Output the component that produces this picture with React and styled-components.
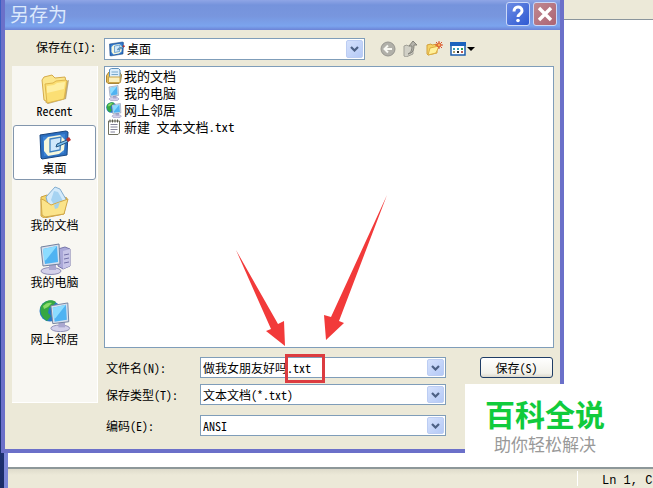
import React from 'react';
import styled, { createGlobalStyle, css } from 'styled-components';

const GlobalStyle = createGlobalStyle`
  * {
    box-sizing: border-box;
  }

  body {
    margin: 0;
    overflow: hidden;
  }

  body,
  button,
  input,
  select {
    color: #000;
    font-family: 'Noto Sans CJK SC', sans-serif;
    font-size: 12px;
    line-height: 16px;
    font-feature-settings: 'hwid' 1;
  }
`;

const Desktop = styled.div`
  position: relative;
  display: flex;
  min-height: 100vh;
  padding-left: 4px;
  background: linear-gradient(#3b5fc4, #24429c 60%, #1a2c66);
`;

const Editor = styled.div`
  display: flex;
  flex: 1;
  flex-direction: column;
  min-width: 0;
  border-left: 4px solid #7a86d8;
`;

const EditorMenu = styled.div`
  height: 20px;
  background: #ece9d8;
  border-bottom: 1px solid #8a959c;
`;

const EditorPage = styled.div`
  flex: 1;
  background: #fff;
`;

const StatusBar = styled.footer`
  display: flex;
  justify-content: flex-end;
  height: 21px;
  background: linear-gradient(#dedbcb, #ece9d8 6px);
  border-top: 2px solid #8d9799;
`;

const StatusCell = styled.div`
  width: 76px;
  margin: 2px 0;
  padding-left: 24px;
  border-left: 1px solid #fff;
  font-family: 'Liberation Mono', monospace;
  line-height: 20px;
  white-space: nowrap;
`;

const Dialog = styled.section`
  position: absolute;
  top: 0;
  left: 1px;
  width: calc(100% - 90px);
  background: #ece9d8;
  border: solid #6b70c9;
  border-width: 0 4px 4px;
`;

const TitleBar = styled.header`
  display: flex;
  align-items: center;
  height: 30px;
  padding: 0 3px 2px 5px;
  gap: 3px;
  background: linear-gradient(#8fa5e6, #7593dc 5px, #7896de 16px, #7ba4ee 26px, #6c83d6);
`;

const Title = styled.h1`
  flex: 1;
  margin: 0;
  color: #dce9fc;
  font-size: 19px;
  font-weight: 400;
  line-height: 28px;
`;

const TitleButton = styled.button`
  width: 24px;
  height: 24px;
  padding: 0;
  background: ${({ $close }) =>
    $close
      ? 'linear-gradient(135deg, #c08890, #ac6474)'
      : 'linear-gradient(135deg, #6a8ae4, #2f5ad2)'};
  border: 1px solid #cbd8f8;
  border-radius: 3px;

  svg {
    display: block;
  }
`;

const Body = styled.div`
  display: grid;
  grid-template-columns: 86px minmax(0, 1fr);
  gap: 6px;
  padding: 8px 6px 13px 7px;
`;

const LookInLabel = styled.label`
  padding-right: 2px;
  line-height: 18px;
  text-align: right;
`;

const Toolbar = styled.div`
  display: flex;
  align-items: center;
  gap: 15px;
`;

const Tools = styled.div`
  display: flex;
  flex: 1;
  gap: 6px;
`;

const ToolButton = styled.button`
  padding: 0;
  background: none;
  border: 0;

  svg {
    display: block;
  }
`;

const Field = styled.div`
  position: relative;
  display: flex;
  align-items: center;
  min-width: 0;
  height: ${({ $tall }) => ($tall ? 22 : 21)}px;
  padding-left: ${({ $tall }) => ($tall ? 4 : 0)}px;
  background: #fff;
  border: 1px solid #7f9db9;
  ${({ $tall }) =>
    $tall &&
    css`
      flex: 0 1 261px;
    `}
`;

const control = css`
  flex: 1;
  min-width: 0;
  height: 100%;
  padding: 0 20px 0 2px;
  appearance: none;
  background: none;
  border: 0;
  outline: 0;
`;

const Select = styled.select`
  ${control}
`;

const Input = styled.input`
  ${control}
`;

const Arrow = styled.span`
  position: absolute;
  top: 1px;
  right: 1px;
  bottom: 1px;
  display: flex;
  align-items: center;
  justify-content: center;
  width: 17px;
  background: linear-gradient(135deg, #d5e1fc, #b4c9f6);
  border: 1px solid #bccdf3;
  border-radius: 2px;
  pointer-events: none;
`;

const Places = styled.nav`
  display: flex;
  flex-direction: column;
  gap: 2px;
  align-self: start;
  height: 337px;
  padding: 2px 1px;
  background: #f8f7f2;
  border: solid #fff;
  border-width: 0 1px 1px 0;
`;

const Place = styled.button`
  display: flex;
  flex-direction: column;
  align-items: center;
  height: 55px;
  padding: 3px 0 0;
  background: ${({ $active }) => ($active ? '#fff' : 'none')};
  border: 1px solid ${({ $active }) => ($active ? '#8296ad' : 'transparent')};
  border-radius: 3px;
  line-height: 14px;
`;

const Files = styled.ul`
  height: 282px;
  margin: 0;
  background: #fff;
  border: 1px solid #7f9db9;
  padding: 0 1px;
  list-style: none;
`;

const File = styled.li`
  display: flex;
  align-items: center;
  gap: 2px;
  height: 17px;
  font-size: 13px;
`;

const Main = styled.div`
  display: flex;
  flex-direction: column;
  gap: 9px;
`;

const Form = styled.form`
  display: flex;
  flex-direction: column;
  gap: 6px;
  padding: 0 1px 0 2px;
`;

const FormRow = styled.div`
  display: grid;
  grid-template-columns: 94px minmax(0, 1fr) 73px;
  align-items: center;
  margin-top: ${({ $spaced }) => ($spaced ? 4 : 0)}px;

  ${Field} {
    margin-right: 34px;
  }
`;

const SaveButton = styled.button`
  height: 21px;
  padding: 0;
  background: linear-gradient(#fff, #f2f1ea 80%, #dcd8cc);
  border: 1px solid #1f3d66;
  border-radius: 3px;
`;

const Marks = styled.svg`
  position: absolute;
  top: 0;
  left: -5px;
  pointer-events: none;
`;

const Watermark = styled.aside`
  position: absolute;
  right: 0;
  bottom: 21px;
  width: 188px;
  height: 83px;
  padding: 10px 28px 0 0;
  background: #fff;
  text-align: center;
`;

const Brand = styled.div`
  color: #10cb3c;
  font-size: 30px;
  font-weight: 700;
  line-height: 38px;
`;

const Slogan = styled.div`
  color: #999;
  font-size: 17px;
  line-height: 24px;
`;

const Chevron = () => (
  <Arrow>
    <svg width="9" height="6" viewBox="0 0 9 6" aria-hidden="true">
      <path d="M1 1l3.5 3.5L8 1" fill="none" stroke="#4d6185" strokeWidth="2.2" />
    </svg>
  </Arrow>
);

const Svg = ({ size, children }) => (
  <svg width={size} height={size} viewBox="0 0 32 32" aria-hidden="true">
    {children}
  </svg>
);

const FolderIcon = ({ size = 32 }) => (
  <Svg size={size}>
    <path d="M27 9l3-1-3 19-18 5-3-2z" fill="#b9a980" />
    <path d="M3 8l2-3 8-2 3 3 10-1 1 4-1 16-17 5-4-2z" fill="#fbe68c" stroke="#d5ab4b" />
    <path d="M6 12l8-1 3-2 10-1 1 1-3 18-17 4z" fill="#fbdf74" stroke="#dfb64c" />
    <path d="M8 14l7-1 3-2 8-1-1 7-17 4z" fill="#fff2ae" opacity=".8" />
  </Svg>
);

const DesktopIcon = ({ size = 32 }) => (
  <Svg size={size}>
    <path d="M1 6l26-4 2 1-1 23-25 4-1-1z" fill="#2c6fc0" stroke="#17457f" />
    <path d="M4 8l22-3-1 19-20 3z" fill="#3f86d6" />
    <path d="M9 8l12-2 5 5-1 10-5 4-11 2-4-5V12z" fill="#f6f7dc" />
    <path d="M11 10l11-2-1 13-10 2z" fill="#cfe8fb" stroke="#3e81c1" strokeWidth="1.3" />
    <path d="M17 18l1-3 10-4 1 2-9 4z" fill="#7cc0ee" stroke="#245582" />
    <path d="M27 10l3-2 2 3-3 2z" fill="#b8302f" />
  </Svg>
);

const DocumentsIcon = ({ size = 32 }) => (
  <Svg size={size}>
    <path d="M2 11l6-2 3 2 9-2 8 3-3 16-20 4-3-2z" fill="#f6d669" stroke="#caa043" />
    <path d="M7 11l9-10 5 2 7 12-9 10-9-3z" fill="#d3eafb" stroke="#82add0" />
    <path d="M15 5l4 1 5 9-7 7-5-8z" fill="#a6d3f2" />
    <path d="M2 13l3 1 7 5 17-6-4 15-19 3-3-2z" fill="#fbe48a" stroke="#d1a84a" />
    <path d="M15 19l6-3-2 6-3 1z" fill="#a8d2e6" />
  </Svg>
);

const PagesIcon = () => (
  <Svg size={16}>
    <path d="M1 15l5-7h21l4 6-2 14-3 3H4l-3-3z" fill="#e5bd56" stroke="#a98538" strokeWidth="2" />
    <path d="M7 3l4-2h14l3 3v20H7z" fill="#dceefc" stroke="#5f92bd" strokeWidth="2" />
    <path d="M11 8h13M11 13h13" stroke="#79aace" strokeWidth="2" />
    <path d="M5 18h23v11H5z" fill="#fbefbd" stroke="#c9a44b" strokeWidth="2" />
  </Svg>
);

const Monitor = () => (
  <>
    <ellipse cx="12" cy="28" rx="10" ry="3.5" fill="#d3d0ea" stroke="#8e8cb4" />
    <path d="M10 20h7v7h-7z" fill="#aaa7cf" />
    <path d="M2 4l18-3 1 20-17 2z" fill="#d7e0ee" stroke="#72809d" />
    <path d="M4 6l14-3 1 16-13 2z" fill="#4fb3f2" />
    <path d="M4 6l14-3-11 14-2 1z" fill="#8cdcff" />
  </>
);

const ComputerIcon = ({ size = 32 }) => (
  <Svg size={size}>
    <path d="M19 6l7-2 5 2v17l-7 3-5-3z" fill="#aaa8d8" stroke="#7675aa" />
    <path d="M24 8l7-2v17l-7 3z" fill="#c7c5e8" />
    <path d="M25 12l5-1M25 16l5-1M25 20l5-1" stroke="#7371a9" />
    <Monitor />
  </Svg>
);

const MyComputerIcon = () => (
  <Svg size={16}>
    <g transform="translate(4 0)">
      <Monitor />
    </g>
  </Svg>
);

const NetworkIcon = ({ size = 32 }) => (
  <Svg size={size}>
    <circle cx="11" cy="11" r="10.5" fill="#2579c8" />
    <path d="M2 6c4-6 11-7 15-4l-4 5-3 1-1 5 3 3-4 5C3 18 0 12 2 6z" fill="#35a743" />
    <path d="M4 6c3-3 6-4 9-3l-4 4-4 2z" fill="#8bdc69" />
    <g transform="translate(10 2) scale(.94)">
      <Monitor />
    </g>
  </Svg>
);

const TextIcon = () => (
  <Svg size={16}>
    <path d="M5 4h22v24l-3 3H5z" fill="#fff" stroke="#70705f" strokeWidth="2" />
    <path d="M9 11h14M9 16h14M9 21h14M9 26h9" stroke="#83839a" strokeWidth="2" />
    <path d="M8 1v6M13 1v6M18 1v6M23 1v6" stroke="#56564c" strokeWidth="2" />
  </Svg>
);

const places = [
  { name: 'Recent', Icon: FolderIcon },
  { name: '桌面', Icon: DesktopIcon, active: true },
  { name: '我的文档', Icon: DocumentsIcon },
  { name: '我的电脑', Icon: ComputerIcon },
  { name: '网上邻居', Icon: NetworkIcon },
];

const files = [
  { name: '我的文档', Icon: PagesIcon },
  { name: '我的电脑', Icon: MyComputerIcon },
  { name: '网上邻居', Icon: NetworkIcon },
  { name: '新建 文本文档.txt', Icon: TextIcon },
];

const ToolIcons = () => (
  <Tools>
    <ToolButton type="button" aria-label="Back">
      <svg width="16" height="16" viewBox="0 0 16 16">
        <circle cx="8" cy="8" r="7" fill="#b1b0a9" stroke="#96958f" />
        <path d="M12 8H5M8 4.5L4.5 8 8 11.5" fill="none" stroke="#f8f8f2" strokeWidth="2" />
      </svg>
    </ToolButton>
    <ToolButton type="button" aria-label="Up">
      <svg width="18" height="16" viewBox="0 0 18 16">
        <path d="M2 5l3-1 1 1 5-1v9l-7 3-2-1z" fill="#d1d0c6" stroke="#a1a097" />
        <path d="M6 13c3-1 4-4 4-8H7l4-5 4 4h-3c0 5-1 8-6 9z" fill="#b5b4ab" stroke="#84837b" />
      </svg>
    </ToolButton>
    <ToolButton type="button" aria-label="New folder">
      <svg width="18" height="16" viewBox="0 0 18 16">
        <path d="M1 4l4-1 1 1 5-1v9l-9 2-1-1z" fill="#f5d366" stroke="#d3a03a" />
        <path d="M4 7l9-2-3 7-8 2z" fill="#fff09a" stroke="#dcae43" />
        <circle cx="13" cy="4" r="2" fill="#f7b254" stroke="#d9502b" />
        <path d="M13 0v2M13 6v2M9 4h2M15 4h2M10 1l1 1M16 1l-1 1M16 7l-1-1" stroke="#d9502b" />
      </svg>
    </ToolButton>
    <ToolButton type="button" aria-label="Views">
      <svg width="25" height="16" viewBox="0 0 25 16">
        <path d="M1 2h14v12H1z" fill="#fff" stroke="#1c5fae" strokeWidth="1.5" />
        <path d="M0 1h16v4H0z" fill="#1b62bd" />
        <path d="M3 7h2v2H3zM7 7h2v2H7z" fill="#329cb5" />
        <path d="M11 7h2v2h-2z" fill="#2ba052" />
        <path d="M3 10h2v2H3z" fill="#a89b69" />
        <path d="M7 10h2v2H7z" fill="#222" />
        <path d="M11 10h2v2h-2z" fill="#b95b51" />
        <path d="M17 6h8l-4 4z" fill="#000" />
      </svg>
    </ToolButton>
  </Tools>
);

const SaveDialog = () => (
  <Dialog>
    <TitleBar>
      <Title>另存为</Title>
      <TitleButton type="button" aria-label="Help">
        <svg width="22" height="22" viewBox="0 0 22 22">
          <path
            d="M7 8.5c0-6 8-6 8-.5 0 3-4 3-4 6"
            fill="none"
            stroke="#fff"
            strokeWidth="3"
          />
          <circle cx="11" cy="17.5" r="1.8" fill="#fff" />
        </svg>
      </TitleButton>
      <TitleButton type="button" aria-label="Close" $close>
        <svg width="22" height="22" viewBox="0 0 22 22">
          <path d="M5 5l12 12M17 5L5 17" stroke="#fff" strokeWidth="3.4" />
        </svg>
      </TitleButton>
    </TitleBar>
    <Body>
      <LookInLabel htmlFor="look-in">保存在(I):</LookInLabel>
      <Toolbar>
        <Field $tall>
          <DesktopIcon size={16} />
          <Select id="look-in">
            <option>桌面</option>
          </Select>
          <Chevron />
        </Field>
        <ToolIcons />
      </Toolbar>
      <Places>
        {places.map(({ name, Icon, active }) => (
          <Place key={name} type="button" $active={active}>
            <Icon />
            {name}
          </Place>
        ))}
      </Places>
      <Main>
        <Files>
          {files.map(({ name, Icon }) => (
            <File key={name}>
              <Icon size={16} />
              {name}
            </File>
          ))}
        </Files>
        <Form>
          <FormRow>
            <label htmlFor="file-name">文件名(N):</label>
            <Field>
              <Input id="file-name" defaultValue="做我女朋友好吗.txt" />
              <Chevron />
            </Field>
            <SaveButton type="button">保存(S)</SaveButton>
          </FormRow>
          <FormRow>
            <label htmlFor="file-type">保存类型(T):</label>
            <Field>
              <Select id="file-type">
                <option>文本文档(*.txt)</option>
              </Select>
              <Chevron />
            </Field>
          </FormRow>
          <FormRow $spaced>
            <label htmlFor="encoding">编码(E):</label>
            <Field>
              <Select id="encoding">
                <option>ANSI</option>
              </Select>
              <Chevron />
            </Field>
          </FormRow>
        </Form>
      </Main>
    </Body>
    <Marks width="400" height="400" viewBox="0 0 400 400" aria-hidden="true">
      <path d="M236 250L278 324 284 321 285 346 266 331 271 329z" fill="#f23a3a" />
      <path d="M387 195L339 321 344 323 326 340 324 315 331 317z" fill="#f23a3a" />
      <rect x="286.5" y="355.5" width="37" height="26" fill="none" stroke="#dc3c40" strokeWidth="3" />
    </Marks>
  </Dialog>
);

const App = () => (
  <>
    <GlobalStyle />
    <Desktop>
      <Editor>
        <EditorMenu />
        <EditorPage />
        <StatusBar>
          <StatusCell>Ln 1, C</StatusCell>
        </StatusBar>
      </Editor>
      <SaveDialog />
      <Watermark>
        <Brand>百科全说</Brand>
        <Slogan>助你轻松解决</Slogan>
      </Watermark>
    </Desktop>
  </>
);

export default App;
